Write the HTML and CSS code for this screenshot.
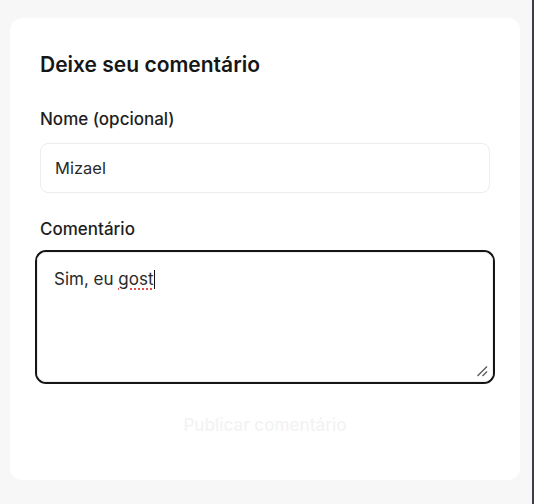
FILE: index.html
```html
<!DOCTYPE html>
<html lang="pt">
<head>
<meta charset="utf-8">
<title>Deixe seu comentário</title>
<link rel="stylesheet" href="styles.css">
</head>
<body>
<div class="page">
  <form class="card">
    <h2 class="title">Deixe seu comentário</h2>
    <label class="label label-name">Nome (opcional)</label>
    <div class="input">Mizael</div>
    <label class="label label-comment">Comentário</label>
    <div class="textarea">
      <span class="text">Sim, eu <span class="typo">gost</span><span class="caret"></span></span>
      <svg class="grip" width="12" height="12" viewBox="0 0 12 12" aria-hidden="true">
        <line x1="1.5" y1="11" x2="11" y2="1.5" stroke="#555" stroke-width="1.2"/>
        <line x1="6.5" y1="11" x2="11" y2="6.5" stroke="#555" stroke-width="1.2"/>
      </svg>
    </div>
    <button type="button" class="submit">Publicar comentário</button>
  </form>
</div>
</body>
</html>
```

FILE: styles.css
```css
html, body {
  margin: 0;
  padding: 0;
  background: #f7f7f7;
}
body {
  font-family: Inter, "Noto Sans", "Liberation Sans", sans-serif;
  color: #1b1b1b;
}
.page {
  height: 504px;
  box-sizing: border-box;
  padding: 18px 12px 0 10px;
  border-right: 2px solid #3d3d47;
}
.card {
  background: #ffffff;
  border-radius: 12px;
  padding: 32px 30px 30px 30px;
  display: flex;
  flex-direction: column;
}
.title {
  margin: 0;
  font-size: 21px;
  line-height: 30px;
  font-weight: 600;
  color: #161616;
}
.label {
  font-size: 17px;
  line-height: 24px;
  font-weight: 500;
  color: #1e1e1e;
}
.label-name {
  margin-top: 27px;
  margin-bottom: 12px;
}
.label-comment {
  margin-top: 24px;
  margin-bottom: 11px;
}
.input {
  height: 50px;
  box-sizing: border-box;
  border: 1px solid #ededed;
  border-radius: 8px;
  padding: 0 14px;
  display: flex;
  align-items: center;
  font-size: 16.5px;
  color: #2a2a2a;
}
.textarea {
  position: relative;
  height: 130px;
  box-sizing: border-box;
  margin: 0 -3px;
  border: 1px solid #ececec;
  border-radius: 9px;
  box-shadow: 0 0 0 2px #151515;
  padding: 14px 16px;
  font-size: 17px;
  line-height: 24px;
  color: #2a2a2a;
}
.typo {
  text-decoration: underline dotted #e0504a;
  text-decoration-thickness: 1.5px;
  text-underline-offset: 3px;
}
.caret {
  display: inline-block;
  width: 1px;
  height: 19px;
  background: #111;
  vertical-align: -4px;
  margin-left: 0.5px;
}
.grip {
  position: absolute;
  right: 4px;
  bottom: 4px;
}
.submit {
  margin-top: 18px;
  height: 50px;
  border: none;
  background: #ffffff;
  font-family: inherit;
  font-size: 17px;
  font-weight: 500;
  color: #f3f3f3;
  cursor: default;
}
```
